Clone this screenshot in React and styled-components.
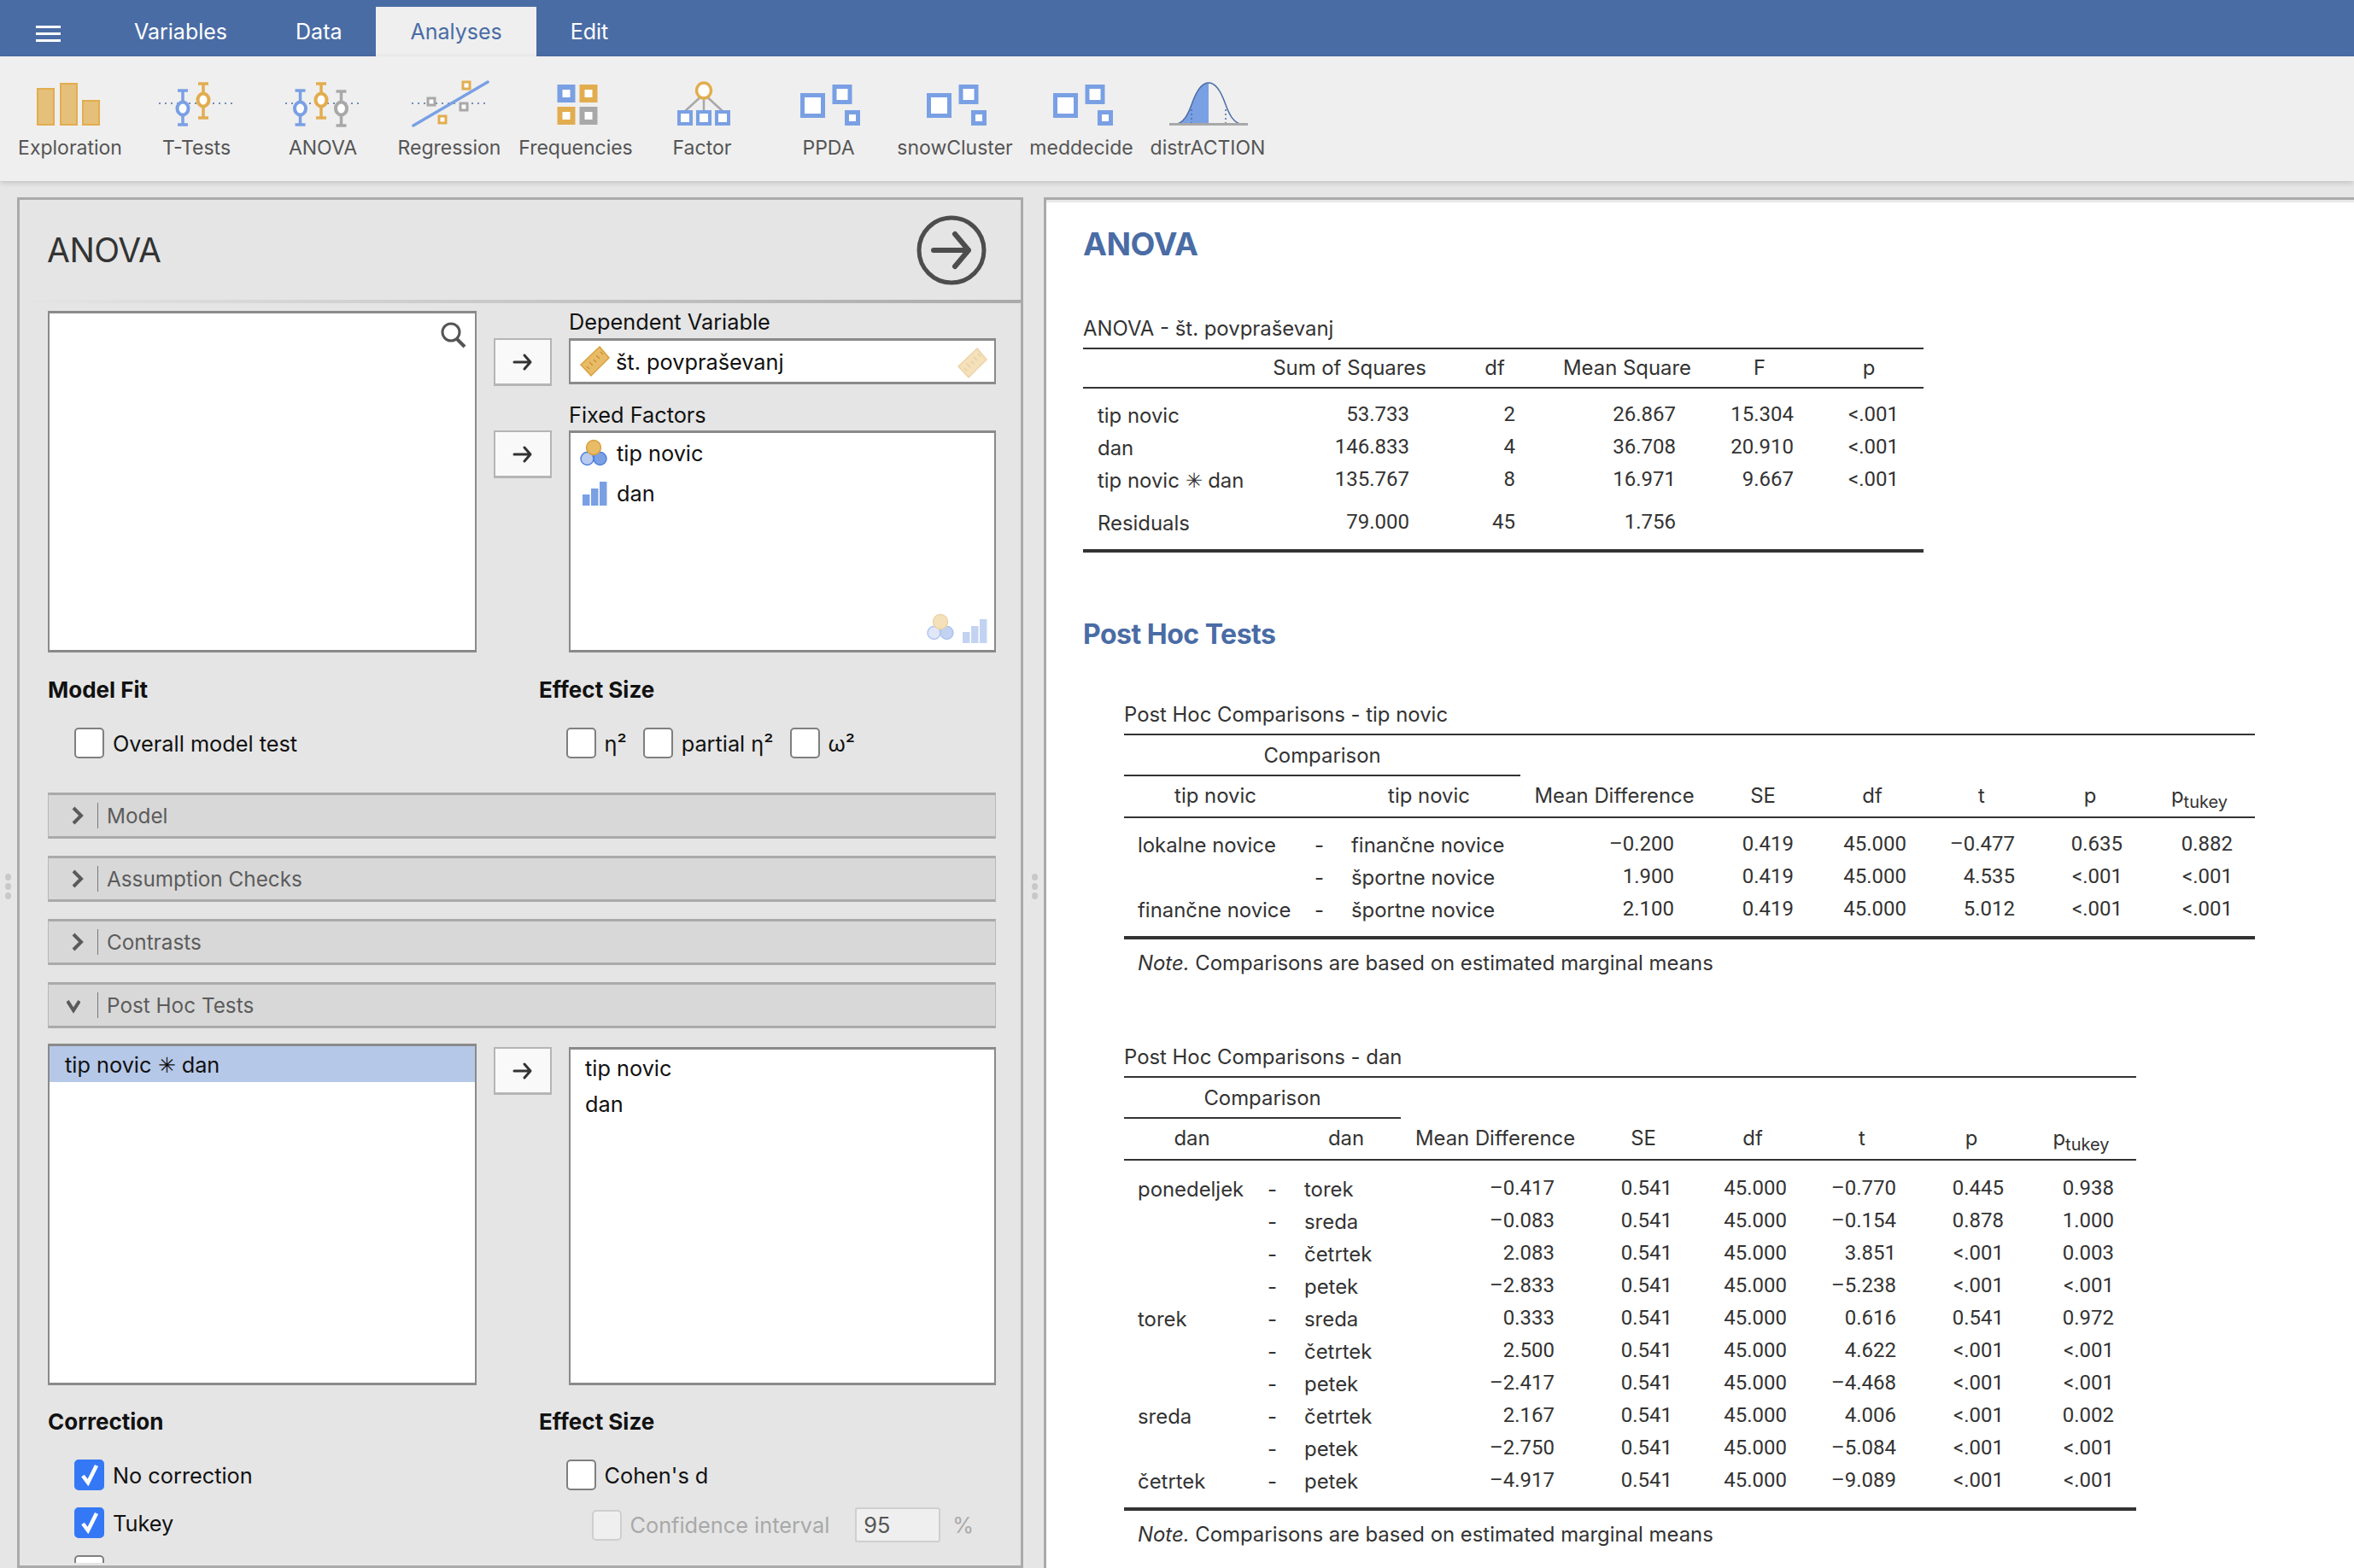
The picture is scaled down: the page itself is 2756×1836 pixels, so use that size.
import React from 'react';
import styled, { createGlobalStyle } from 'styled-components';

const BLUE = '#7aa0e4';
const ORANGE = '#e2ad4f';
const GREY = '#a8a8a8';

const GlobalStyle = createGlobalStyle`
  html, body {
    margin: 0;
    padding: 0;
    background: #e6e6e6;
  }
  body {
    font-family: Inter, "Liberation Sans", sans-serif;
    overflow: hidden;
  }
`;

const Page = styled.div`
  width: 2756px;
  height: 1836px;
  display: flex;
  flex-direction: column;
  overflow: hidden;
`;

const TopBar = styled.div`
  height: 66px;
  flex: none;
  display: flex;
  align-items: flex-end;
  background: #4a6ca5;
`;

const MenuButton = styled.div`
  width: 117px;
  height: 66px;
  padding: 30px 0 0 42px;
  box-sizing: border-box;
  display: flex;
  flex-direction: column;
  gap: 5px;
  span {
    display: block;
    width: 29px;
    height: 3px;
    background: #fff;
  }
`;

const Tab = styled.div`
  height: 58px;
  padding: 0 40px;
  display: flex;
  align-items: center;
  font-size: 25px;
  color: ${p => (p.$active ? '#4a6ca5' : '#fff')};
  background: ${p => (p.$active ? '#efefef' : 'transparent')};
`;

const Toolbar = styled.div`
  height: 146px;
  flex: none;
  display: flex;
  padding-left: 8px;
  background: #efefef;
  box-shadow: 0 2px 6px rgba(0, 0, 0, 0.16);
  position: relative;
  z-index: 1;
`;

const ToolItem = styled.div`
  width: 148px;
  display: flex;
  flex-direction: column;
  align-items: center;
  padding-top: 28px;
  font-size: 23px;
  color: #555;
  white-space: nowrap;
  svg {
    display: block;
    margin-bottom: 9px;
  }
`;

const Main = styled.div`
  flex: 1;
  display: flex;
  padding: 19px 0 0 20px;
  min-height: 0;
`;

const Panel = styled.div`
  width: 1178px;
  box-sizing: border-box;
  flex: none;
  display: flex;
  flex-direction: column;
  border: 3px solid #aaaaaa;
  padding-bottom: 3px;
  background: #e5e5e5;
`;

const PanelHeader = styled.div`
  height: 117px;
  flex: none;
  display: flex;
  align-items: center;
  justify-content: space-between;
  padding: 0 39px 0 32px;
  font-size: 39px;
  color: #333;
  letter-spacing: -0.5px;
`;

const HeaderRule = styled.div`
  height: 4px;
  flex: none;
  background: linear-gradient(to right, #e5e5e5, #aaaaaa);
`;

const PanelBody = styled.div`
  flex: 1;
  min-height: 0;
  overflow: hidden;
  padding: 9px 29px 0 33px;
`;

const Assign = styled.div`
  display: grid;
  grid-template-columns: 502px 68px 500px;
  column-gap: 20px;
  height: ${p => p.$h}px;
`;

const ListBox = styled.div`
  position: relative;
  box-sizing: border-box;
  background: #fff;
  border: 2px solid #8a8a8a;
  border-top-width: 3px;
  border-bottom-width: 3px;
  margin-top: ${p => p.$top || 0}px;
  flex: ${p => (p.$grow ? 1 : 'none')};
`;

const SearchMark = styled.svg`
  position: absolute;
  top: 9px;
  right: 9px;
`;

const CornerIcons = styled.div`
  position: absolute;
  right: 4px;
  bottom: 8px;
  display: flex;
  align-items: flex-end;
  gap: 3px;
  opacity: 0.45;
`;

const MiddleCol = styled.div`
  display: flex;
  flex-direction: column;
  gap: ${p => p.$gap || 0}px;
  padding-top: ${p => p.$top}px;
`;

const ArrowButton = styled.div`
  height: 56px;
  box-sizing: border-box;
  flex: none;
  display: flex;
  align-items: center;
  justify-content: center;
  background: #f9f9f9;
  border: 2px solid #b5b5b5;
  border-bottom-width: 3px;
`;

const RightCol = styled.div`
  display: flex;
  flex-direction: column;
`;

const TargetLabel = styled.div`
  height: ${p => p.$h}px;
  box-sizing: border-box;
  padding-bottom: ${p => p.$pb || 0}px;
  display: flex;
  align-items: center;
  font-size: 25.3px;
  color: #111;
  white-space: nowrap;
`;

const SingleBox = styled.div`
  position: relative;
  height: 54px;
  box-sizing: border-box;
  flex: none;
  margin-bottom: 18px;
  display: flex;
  align-items: center;
  gap: 6px;
  padding-left: 11px;
  background: #fff;
  border: 2px solid #8a8a8a;
  border-top-width: 3px;
  border-bottom-width: 3px;
  font-size: 25.3px;
  color: #111;
`;

const FadedRuler = styled.div`
  position: absolute;
  right: 7px;
  top: 7px;
  opacity: 0.45;
  line-height: 0;
`;

const VarRow = styled.div`
  height: 47px;
  display: flex;
  align-items: center;
  gap: 7px;
  padding-left: 11px;
  font-size: 25.3px;
  color: #111;
  svg {
    flex: none;
  }
`;

const PlainItem = styled.div`
  height: ${p => p.$h || 42}px;
  display: flex;
  align-items: center;
  padding-left: ${p => p.$pl || 18}px;
  font-size: 25.3px;
  color: #111;
  background: ${p => (p.$selected ? '#b6c8e8' : 'transparent')};
`;

const OptionGroups = styled.div`
  display: grid;
  grid-template-columns: 575px 1fr;
  margin-top: ${p => p.$top}px;
`;

const Group = styled.div`
  display: flex;
  flex-direction: column;
`;

const GroupTitle = styled.div`
  height: 28px;
  display: flex;
  align-items: center;
  font-size: 26px;
  font-weight: 700;
  color: #111;
  margin-bottom: 31px;
`;

const OptionColumn = styled.div`
  display: flex;
  flex-direction: column;
  gap: 20px;
  padding-left: ${p => p.$indent || 31.5}px;
`;

const OptionRow = styled.div`
  display: flex;
  align-items: center;
  height: 36px;
  gap: ${p => p.$gap || 0}px;
`;

const Check = styled.label`
  display: flex;
  align-items: center;
  gap: 10px;
  font-size: 25.3px;
  color: ${p => (p.$disabled ? '#a9a9a9' : '#111')};
  white-space: nowrap;
`;

const Box = styled.span`
  width: 35px;
  height: 36px;
  box-sizing: border-box;
  flex: none;
  display: flex;
  align-items: center;
  justify-content: center;
  border-radius: 5px;
  background: ${p => (p.$checked ? '#3478f6' : p.$disabled ? '#efefef' : '#fff')};
  border: 2px solid ${p => (p.$checked ? '#3478f6' : p.$disabled ? '#cfcfcf' : '#7f7f7f')};
`;

const CiRow = styled.div`
  display: flex;
  align-items: center;
  height: 41px;
  padding-left: 30px;
`;

const NumberBox = styled.div`
  width: 100px;
  height: 41px;
  box-sizing: border-box;
  margin-left: 30px;
  padding-left: 8px;
  display: flex;
  align-items: center;
  background: #efefef;
  border: 2px solid #cfcfcf;
  border-radius: 3px;
  font-size: 25.3px;
  color: #555;
`;

const Percent = styled.span`
  margin-left: 14px;
  font-size: 25.3px;
  color: #a9a9a9;
`;

const Sections = styled.div`
  display: flex;
  flex-direction: column;
  gap: 20px;
  margin: 40px 0 18px;
`;

const Section = styled.div`
  height: 54px;
  box-sizing: border-box;
  display: flex;
  align-items: center;
  padding-left: 26px;
  background: #d8d8d8;
  border: 1px solid #b8b8b8;
  border-top: 3px solid #aaaaaa;
  border-bottom: 3px solid #aaaaaa;
  font-size: 24.3px;
  color: #5c5c5c;
`;

const SectionDivider = styled.span`
  width: 1px;
  height: 30px;
  margin: 0 10px 0 ${p => p.$gap}px;
  background: #777;
`;

const Sash = styled.div`
  width: 26px;
  flex: none;
  display: flex;
  flex-direction: column;
  align-items: center;
  gap: 3px;
  padding-top: 792px;
  span {
    width: 7px;
    height: 8px;
    border-radius: 50%;
    background: #c8c8c8;
  }
`;

const EdgeSash = styled(Sash)`
  position: absolute;
  left: -4px;
  top: 212px;
  padding-top: 811px;
`;

const Results = styled.div`
  flex: 1;
  min-width: 0;
  margin-left: -2px;
  background: #fff;
  border-left: 3px solid #aaaaaa;
  border-top: 3px solid #aaaaaa;
  box-shadow: inset 0 3px 0 #e8e8e8;
  padding: 31px 0 0 43px;
  color: #333;
  font-size: 23.9px;
  overflow: hidden;
`;

const H1 = styled.div`
  height: 44px;
  box-sizing: border-box;
  padding-bottom: 3px;
  display: flex;
  align-items: center;
  font-size: 37.5px;
  font-weight: 700;
  color: #4a6ca5;
  letter-spacing: -0.5px;
`;

const H2 = styled(H1)`
  height: 40px;
  margin-top: 77px;
  font-size: 32px;
`;

const TableBlock = styled.div`
  width: ${p => p.$w}px;
  margin-left: ${p => p.$ml || 0}px;
`;

const TableTitle = styled.div`
  height: 30px;
  line-height: 30px;
  margin-top: ${p => p.$top}px;
  margin-bottom: ${p => p.$bottom || 7}px;
  white-space: nowrap;
`;

const Rule = styled.div`
  height: ${p => p.$h || 2}px;
  margin-top: ${p => p.$top || 0}px;
  background: #333;
`;

const GridRow = styled.div`
  display: grid;
  grid-template-columns: ${p => p.$cols};
  height: ${p => p.$h || 38}px;
  align-items: center;
  white-space: nowrap;
  margin-top: ${p => p.$top || 0}px;
`;

const Cell = styled.div`
  text-align: ${p => p.$align || 'right'};
  padding-right: ${p => p.$pr || 0}px;
  padding-left: ${p => p.$pl || 0}px;
  padding-top: ${p => (p.$align === 'left' ? 2 : 0)}px;
  padding-bottom: ${p => (p.$align === 'center' ? 2 : 0)}px;
  ${p => !p.$align && 'font-family: Roboto, "Liberation Sans", sans-serif; font-size: 24px;'}
`;

const SpanHead = styled.div`
  width: ${p => p.$w}px;
  height: ${p => p.$h}px;
  box-sizing: border-box;
  display: flex;
  align-items: center;
  justify-content: center;
  border-bottom: 2px solid #333;
`;

const Tukey = styled.sub`
  font-size: 20px;
  line-height: 0;
`;

const Note = styled.div`
  height: 30px;
  line-height: 30px;
  margin-top: 13px;
  padding-left: 16px;
  white-space: nowrap;
`;

const BarsIcon = () => (
  <svg width="100" height="56" viewBox="0 0 100 56">
    <g fill="#e5c07a" stroke={ORANGE} strokeWidth="2">
      <rect x="12" y="10" width="19" height="42" />
      <rect x="39" y="4" width="19" height="48" />
      <rect x="65" y="24" width="19" height="28" />
    </g>
  </svg>
);

const Whisker = ({ x, top, bottom, cy, color }) => (
  <g stroke={color} fill="none">
    <line x1={x - 6} x2={x + 6} y1={top} y2={top} strokeWidth="3.5" />
    <line x1={x - 6} x2={x + 6} y1={bottom} y2={bottom} strokeWidth="3.5" />
    <line x1={x} x2={x} y1={top} y2={bottom} strokeWidth="3.5" />
    <ellipse cx={x} cy={cy} rx="6.5" ry="7.5" fill="#fff" strokeWidth="4" />
  </g>
);

const DotLine = ({ x1, x2 }) => (
  <line x1={x1} x2={x2} y1="27" y2="27" stroke="#4a6ca5" strokeWidth="1.5" strokeDasharray="2 5" />
);

const TTestIcon = () => (
  <svg width="100" height="56" viewBox="0 0 100 56">
    <DotLine x1="6" x2="94" />
    <Whisker x={34} top={12} bottom={52} cy={33} color={BLUE} />
    <Whisker x={58} top={4} bottom={44} cy={23} color={ORANGE} />
  </svg>
);

const AnovaIcon = () => (
  <svg width="100" height="56" viewBox="0 0 100 56">
    <DotLine x1="6" x2="93" />
    <Whisker x={23.5} top={12} bottom={52} cy={33} color={BLUE} />
    <Whisker x={48} top={4} bottom={44} cy={23} color={ORANGE} />
    <Whisker x={71.5} top={13} bottom={53} cy={33} color={GREY} />
  </svg>
);

const SmallSquare = ({ cx, cy, color }) => (
  <rect x={cx - 4} y={cy - 4} width="8" height="8" fill="#fff" stroke={color} strokeWidth="3" />
);

const RegressionIcon = () => (
  <svg width="100" height="56" viewBox="0 0 100 56">
    <DotLine x1="6" x2="96" />
    <line x1="8" y1="53" x2="95" y2="2" stroke={BLUE} strokeWidth="3.5" strokeLinecap="round" />
    <SmallSquare cx={70} cy={6} color={ORANGE} />
    <SmallSquare cx={29} cy={25} color={GREY} />
    <SmallSquare cx={67} cy={31} color={GREY} />
    <SmallSquare cx={42} cy={46} color={ORANGE} />
  </svg>
);

const FreqSquare = ({ x, y, color }) => (
  <rect x={x + 3} y={y + 3} width="15" height="15" fill="#fff" stroke={color} strokeWidth="6" />
);

const FrequenciesIcon = () => (
  <svg width="100" height="56" viewBox="0 0 100 56">
    <FreqSquare x={28.5} y={5} color={BLUE} />
    <FreqSquare x={54.5} y={5} color={ORANGE} />
    <FreqSquare x={28.5} y={31} color={ORANGE} />
    <FreqSquare x={54.5} y={31} color={GREY} />
  </svg>
);

const FactorIcon = () => (
  <svg width="100" height="56" viewBox="0 0 100 56">
    <g stroke={GREY} strokeWidth="2.5">
      <line x1="52" y1="16" x2="28" y2="38" />
      <line x1="52" y1="16" x2="52" y2="38" />
      <line x1="52" y1="16" x2="76" y2="38" />
    </g>
    <ellipse cx="52" cy="12" rx="8.5" ry="9" fill="#fff" stroke={ORANGE} strokeWidth="3.5" />
    <g fill="#fff" stroke={BLUE} strokeWidth="4">
      <rect x="23" y="37" width="14" height="14" />
      <rect x="45" y="37" width="14" height="14" />
      <rect x="67" y="37" width="14" height="14" />
    </g>
  </svg>
);

const ModuleIcon = () => (
  <svg width="100" height="56" viewBox="0 0 100 56">
    <g fill="#fff" stroke={BLUE} strokeWidth="5">
      <rect x="19.5" y="17.5" width="24" height="24" />
      <rect x="57" y="7.5" width="18" height="18" />
      <rect x="71.5" y="37.5" width="13" height="13" />
    </g>
  </svg>
);

const DistrIcon = () => (
  <svg width="100" height="56" viewBox="0 0 100 56">
    <path d="M10 52 C22 51 27 40 32 26 C37 12 43 3 51 3 L51 52 Z" fill={BLUE} />
    <path d="M10 52 C22 51 27 40 32 26 C37 12 43 3 51 3 C59 3 65 12 70 26 C75 40 80 51 92 52" fill="none" stroke="#4a6ca5" strokeWidth="1.5" />
    <line x1="31" y1="34" x2="31" y2="52" stroke="#4a6ca5" strokeWidth="1.5" strokeDasharray="2 3" />
    <line x1="71" y1="34" x2="71" y2="52" stroke="#4a6ca5" strokeWidth="1.5" strokeDasharray="2 3" />
    <rect x="5" y="50" width="92" height="3" fill={GREY} />
  </svg>
);

const RulerIcon = () => (
  <svg width="36" height="38" viewBox="0 0 36 38" style={{ flex: 'none' }}>
    <polygon points="23,2 34,15 13,36 1,23" fill="#e8bb66" stroke="#d9a03f" strokeWidth="1.5" />
    <g stroke="#c98f30" strokeWidth="1.2">
      <line x1="27" y1="11" x2="24" y2="8" />
      <line x1="23" y1="16" x2="19" y2="12" />
      <line x1="19" y1="20" x2="16" y2="17" />
      <line x1="15" y1="24" x2="11" y2="20" />
      <line x1="11" y1="28" x2="8" y2="25" />
    </g>
  </svg>
);

const NominalIcon = () => (
  <svg width="36" height="36" viewBox="0 0 36 36">
    <g stroke="#4f7fdc" strokeWidth="1.5">
      <circle cx="8.5" cy="24" r="7.5" fill="#b9ccf0" />
      <circle cx="23.5" cy="24" r="7.5" fill="#7aa0e4" />
    </g>
    <circle cx="16" cy="11" r="8.5" fill="#e8bb66" stroke="#d9a03f" strokeWidth="1.5" />
  </svg>
);

const OrdinalIcon = () => (
  <svg width="36" height="28" viewBox="0 0 36 28">
    <rect x="3" y="15" width="8.5" height="13" fill={BLUE} />
    <rect x="13" y="8" width="8.5" height="20" fill={BLUE} />
    <rect x="23" y="0" width="8.5" height="28" fill={BLUE} />
  </svg>
);

const SmallArrow = () => (
  <svg width="26" height="26" viewBox="0 0 26 26" fill="none" stroke="#333" strokeWidth="3" strokeLinecap="round" strokeLinejoin="round">
    <path d="M3 13 H22 M15 5 L22 13 L15 21" />
  </svg>
);

const RunButton = () => (
  <svg width="84" height="84" viewBox="0 0 84 84" fill="none" stroke="#4d4d4d" strokeLinecap="round" strokeLinejoin="round">
    <circle cx="42" cy="42" r="38" strokeWidth="5" />
    <path d="M21 42 H62 M46 23 L62 42 L46 61" strokeWidth="6" />
  </svg>
);

const ChevronSvg = styled.svg`
  margin-left: ${p => p.$ml || 0}px;
  margin-right: ${p => p.$mr || 0}px;
`;

const Chevron = ({ open }) => (
  <ChevronSvg $ml={open ? -5 : 0} $mr={open ? 5 : 0} width="16" height="22" viewBox="0 0 16 22" fill="none" stroke="#5a5a5a" strokeWidth="4">
    {open ? <path d="M1 6 L8 17 L15 6" /> : <path d="M3 2 L12 11 L3 20" />}
  </ChevronSvg>
);

const Tick = () => (
  <svg width="22" height="26" viewBox="0 0 22 26" fill="none" stroke="#fff" strokeWidth="4.5">
    <path d="M3 14 L9 22 L19 2" />
  </svg>
);

const Option = ({ label, checked, disabled }) => (
  <Check $disabled={disabled}>
    <Box $checked={checked} $disabled={disabled}>{checked && <Tick />}</Box>
    <span>{label}</span>
  </Check>
);

const tools = [
  ['Exploration', BarsIcon],
  ['T-Tests', TTestIcon],
  ['ANOVA', AnovaIcon],
  ['Regression', RegressionIcon],
  ['Frequencies', FrequenciesIcon],
  ['Factor', FactorIcon],
  ['PPDA', ModuleIcon],
  ['snowCluster', ModuleIcon],
  ['meddecide', ModuleIcon],
  ['distrACTION', DistrIcon],
];

const anovaCols = '222px 180px 160px 150px 160px 96px 16px';
const anovaPad = [20, 56, 18, 40, 13];
const anovaHead = ['Sum of Squares', 'df', 'Mean Square', 'F', 'p'];
const anovaRows = [
  ['tip novic', '53.733', '2', '26.867', '15.304', '<.001'],
  ['dan', '146.833', '4', '36.708', '20.910', '<.001'],
  ['tip novic ✳ dan', '135.767', '8', '16.971', '9.667', '<.001'],
];

const tipCols = '214px 36px 214px 220px 128px 128px 128px 126px 130px';
const tipPad = [40, 28, 24, 25, 25, 26];
const tipRows = [
  ['lokalne novice', 'finančne novice', '–0.200', '0.419', '45.000', '–0.477', '0.635', '0.882'],
  ['', 'športne novice', '1.900', '0.419', '45.000', '4.535', '<.001', '<.001'],
  ['finančne novice', 'športne novice', '2.100', '0.419', '45.000', '5.012', '<.001', '<.001'],
];

const danCols = '159px 36px 130px 219px 128px 128px 128px 128px 129px';
const danPad = [40, 30, 24, 24, 26, 26];
const danRows = [
  ['ponedeljek', 'torek', '–0.417', '0.541', '45.000', '–0.770', '0.445', '0.938'],
  ['', 'sreda', '–0.083', '0.541', '45.000', '–0.154', '0.878', '1.000'],
  ['', 'četrtek', '2.083', '0.541', '45.000', '3.851', '<.001', '0.003'],
  ['', 'petek', '–2.833', '0.541', '45.000', '–5.238', '<.001', '<.001'],
  ['torek', 'sreda', '0.333', '0.541', '45.000', '0.616', '0.541', '0.972'],
  ['', 'četrtek', '2.500', '0.541', '45.000', '4.622', '<.001', '<.001'],
  ['', 'petek', '–2.417', '0.541', '45.000', '–4.468', '<.001', '<.001'],
  ['sreda', 'četrtek', '2.167', '0.541', '45.000', '4.006', '<.001', '0.002'],
  ['', 'petek', '–2.750', '0.541', '45.000', '–5.084', '<.001', '<.001'],
  ['četrtek', 'petek', '–4.917', '0.541', '45.000', '–9.089', '<.001', '<.001'],
];

const AnovaTable = () => (
  <TableBlock $w={984}>
    <TableTitle $top={61}>ANOVA - št. povpraševanj</TableTitle>
    <Rule />
    <GridRow $cols={anovaCols} $h={44}>
      <Cell $align="center" />
      {anovaHead.map(h => <Cell key={h} $align="center">{h}</Cell>)}
    </GridRow>
    <Rule />
    {anovaRows.map((row, i) => (
      <GridRow key={row[0]} $cols={anovaCols} $top={i === 0 ? 11 : 0}>
        <Cell $align="left" $pl={17}>{row[0]}</Cell>
        {row.slice(1).map((v, j) => <Cell key={j} $pr={anovaPad[j]}>{v}</Cell>)}
      </GridRow>
    ))}
    <GridRow $cols={anovaCols} $top={12}>
      <Cell $align="left" $pl={17}>Residuals</Cell>
      <Cell $pr={20}>79.000</Cell>
      <Cell $pr={56}>45</Cell>
      <Cell $pr={18}>1.756</Cell>
    </GridRow>
    <Rule $h={4} $top={13} />
  </TableBlock>
);

const PostHocTable = ({ title, name, cols, pad, rows, width, spanWidth, titleTop, rowsTop }) => (
  <TableBlock $w={width} $ml={48}>
    <TableTitle $top={titleTop}>{title}</TableTitle>
    <Rule />
    <SpanHead $w={spanWidth} $h={48}>Comparison</SpanHead>
    <GridRow $cols={cols} $h={47}>
      <Cell $align="center">{name}</Cell>
      <Cell $align="center" />
      <Cell $align="center">{name}</Cell>
      <Cell $align="center">Mean Difference</Cell>
      <Cell $align="center">SE</Cell>
      <Cell $align="center">df</Cell>
      <Cell $align="center">t</Cell>
      <Cell $align="center">p</Cell>
      <Cell $align="center">p<Tukey>tukey</Tukey></Cell>
    </GridRow>
    <Rule />
    {rows.map((row, i) => (
      <GridRow key={i} $cols={cols} $top={i === 0 ? rowsTop : 0}>
        <Cell $align="left" $pl={16}>{row[0]}</Cell>
        <Cell $align="left" $pl={9}>-</Cell>
        <Cell $align="left" $pl={16}>{row[1]}</Cell>
        {row.slice(2).map((v, j) => <Cell key={j} $pr={pad[j]}>{v}</Cell>)}
      </GridRow>
    ))}
    <Rule $h={4} $top={13} />
    <Note><em>Note.</em> Comparisons are based on estimated marginal means</Note>
  </TableBlock>
);

export default function App() {
  return (
    <Page>
      <GlobalStyle />
      <TopBar>
        <MenuButton><span /><span /><span /></MenuButton>
        <Tab>Variables</Tab>
        <Tab>Data</Tab>
        <Tab $active>Analyses</Tab>
        <Tab>Edit</Tab>
      </TopBar>
      <Toolbar>
        {tools.map(([label, Icon]) => (
          <ToolItem key={label}><Icon />{label}</ToolItem>
        ))}
      </Toolbar>
      <Main>
        <EdgeSash><span /><span /><span /></EdgeSash>
        <Panel>
          <PanelHeader>ANOVA<RunButton /></PanelHeader>
          <HeaderRule />
          <PanelBody>
            <Assign $h={400}>
              <ListBox>
                <SearchMark width="32" height="32" viewBox="0 0 32 32" fill="none" stroke="#555" strokeWidth="3">
                  <circle cx="13" cy="13" r="10" />
                  <line x1="20" y1="21" x2="29" y2="30" strokeWidth="4" />
                </SearchMark>
              </ListBox>
              <MiddleCol $top={32} $gap={52}>
                <ArrowButton><SmallArrow /></ArrowButton>
                <ArrowButton><SmallArrow /></ArrowButton>
              </MiddleCol>
              <RightCol>
                <TargetLabel $h={32} $pb={7}>Dependent Variable</TargetLabel>
                <SingleBox>
                  <RulerIcon />
                  <span>št. povpraševanj</span>
                  <FadedRuler><RulerIcon /></FadedRuler>
                </SingleBox>
                <TargetLabel $h={36} $pb={2}>Fixed Factors</TargetLabel>
                <ListBox $grow>
                  <VarRow><NominalIcon /><span>tip novic</span></VarRow>
                  <VarRow><OrdinalIcon /><span>dan</span></VarRow>
                  <CornerIcons><NominalIcon /><OrdinalIcon /></CornerIcons>
                </ListBox>
              </RightCol>
            </Assign>
            <OptionGroups $top={29}>
              <Group>
                <GroupTitle>Model Fit</GroupTitle>
                <OptionColumn $indent={31}>
                  <OptionRow><Option label="Overall model test" /></OptionRow>
                </OptionColumn>
              </Group>
              <Group>
                <GroupTitle>Effect Size</GroupTitle>
                <OptionColumn>
                  <OptionRow $gap={19}>
                    <Option label="η²" />
                    <Option label="partial η²" />
                    <Option label="ω²" />
                  </OptionRow>
                </OptionColumn>
              </Group>
            </OptionGroups>
            <Sections>
              <Section><Chevron /><SectionDivider $gap={15} />Model</Section>
              <Section><Chevron /><SectionDivider $gap={15} />Assumption Checks</Section>
              <Section><Chevron /><SectionDivider $gap={15} />Contrasts</Section>
              <Section><Chevron open /><SectionDivider $gap={15} />Post Hoc Tests</Section>
            </Sections>
            <Assign $h={400}>
              <ListBox>
                <PlainItem $selected $h={42}>tip novic ✳ dan</PlainItem>
              </ListBox>
              <MiddleCol $top={4}>
                <ArrowButton><SmallArrow /></ArrowButton>
              </MiddleCol>
              <ListBox $top={4}>
                <PlainItem $h={42} $pl={17}>tip novic</PlainItem>
                <PlainItem $h={42} $pl={17}>dan</PlainItem>
              </ListBox>
            </Assign>
            <OptionGroups $top={28}>
              <Group>
                <GroupTitle>Correction</GroupTitle>
                <OptionColumn $indent={31}>
                  <OptionRow><Option label="No correction" checked /></OptionRow>
                  <OptionRow><Option label="Tukey" checked /></OptionRow>
                  <OptionRow><Option label="Scheffe" /></OptionRow>
                </OptionColumn>
              </Group>
              <Group>
                <GroupTitle>Effect Size</GroupTitle>
                <OptionColumn>
                  <OptionRow><Option label="Cohen's d" /></OptionRow>
                  <CiRow>
                    <Option label="Confidence interval" disabled />
                    <NumberBox>95</NumberBox>
                    <Percent>%</Percent>
                  </CiRow>
                </OptionColumn>
              </Group>
            </OptionGroups>
          </PanelBody>
        </Panel>
        <Sash><span /><span /><span /></Sash>
        <Results>
          <H1>ANOVA</H1>
          <AnovaTable />
          <H2>Post Hoc Tests</H2>
          <PostHocTable
            title="Post Hoc Comparisons - tip novic"
            name="tip novic"
            cols={tipCols}
            pad={tipPad}
            rows={tipRows}
            width={1324}
            spanWidth={464}
            titleTop={58}
            rowsTop={11}
          />
          <PostHocTable
            title="Post Hoc Comparisons - dan"
            name="dan"
            cols={danCols}
            pad={danPad}
            rows={danRows}
            width={1185}
            spanWidth={324}
            titleTop={80}
            rowsTop={13}
          />
        </Results>
      </Main>
    </Page>
  );
}
